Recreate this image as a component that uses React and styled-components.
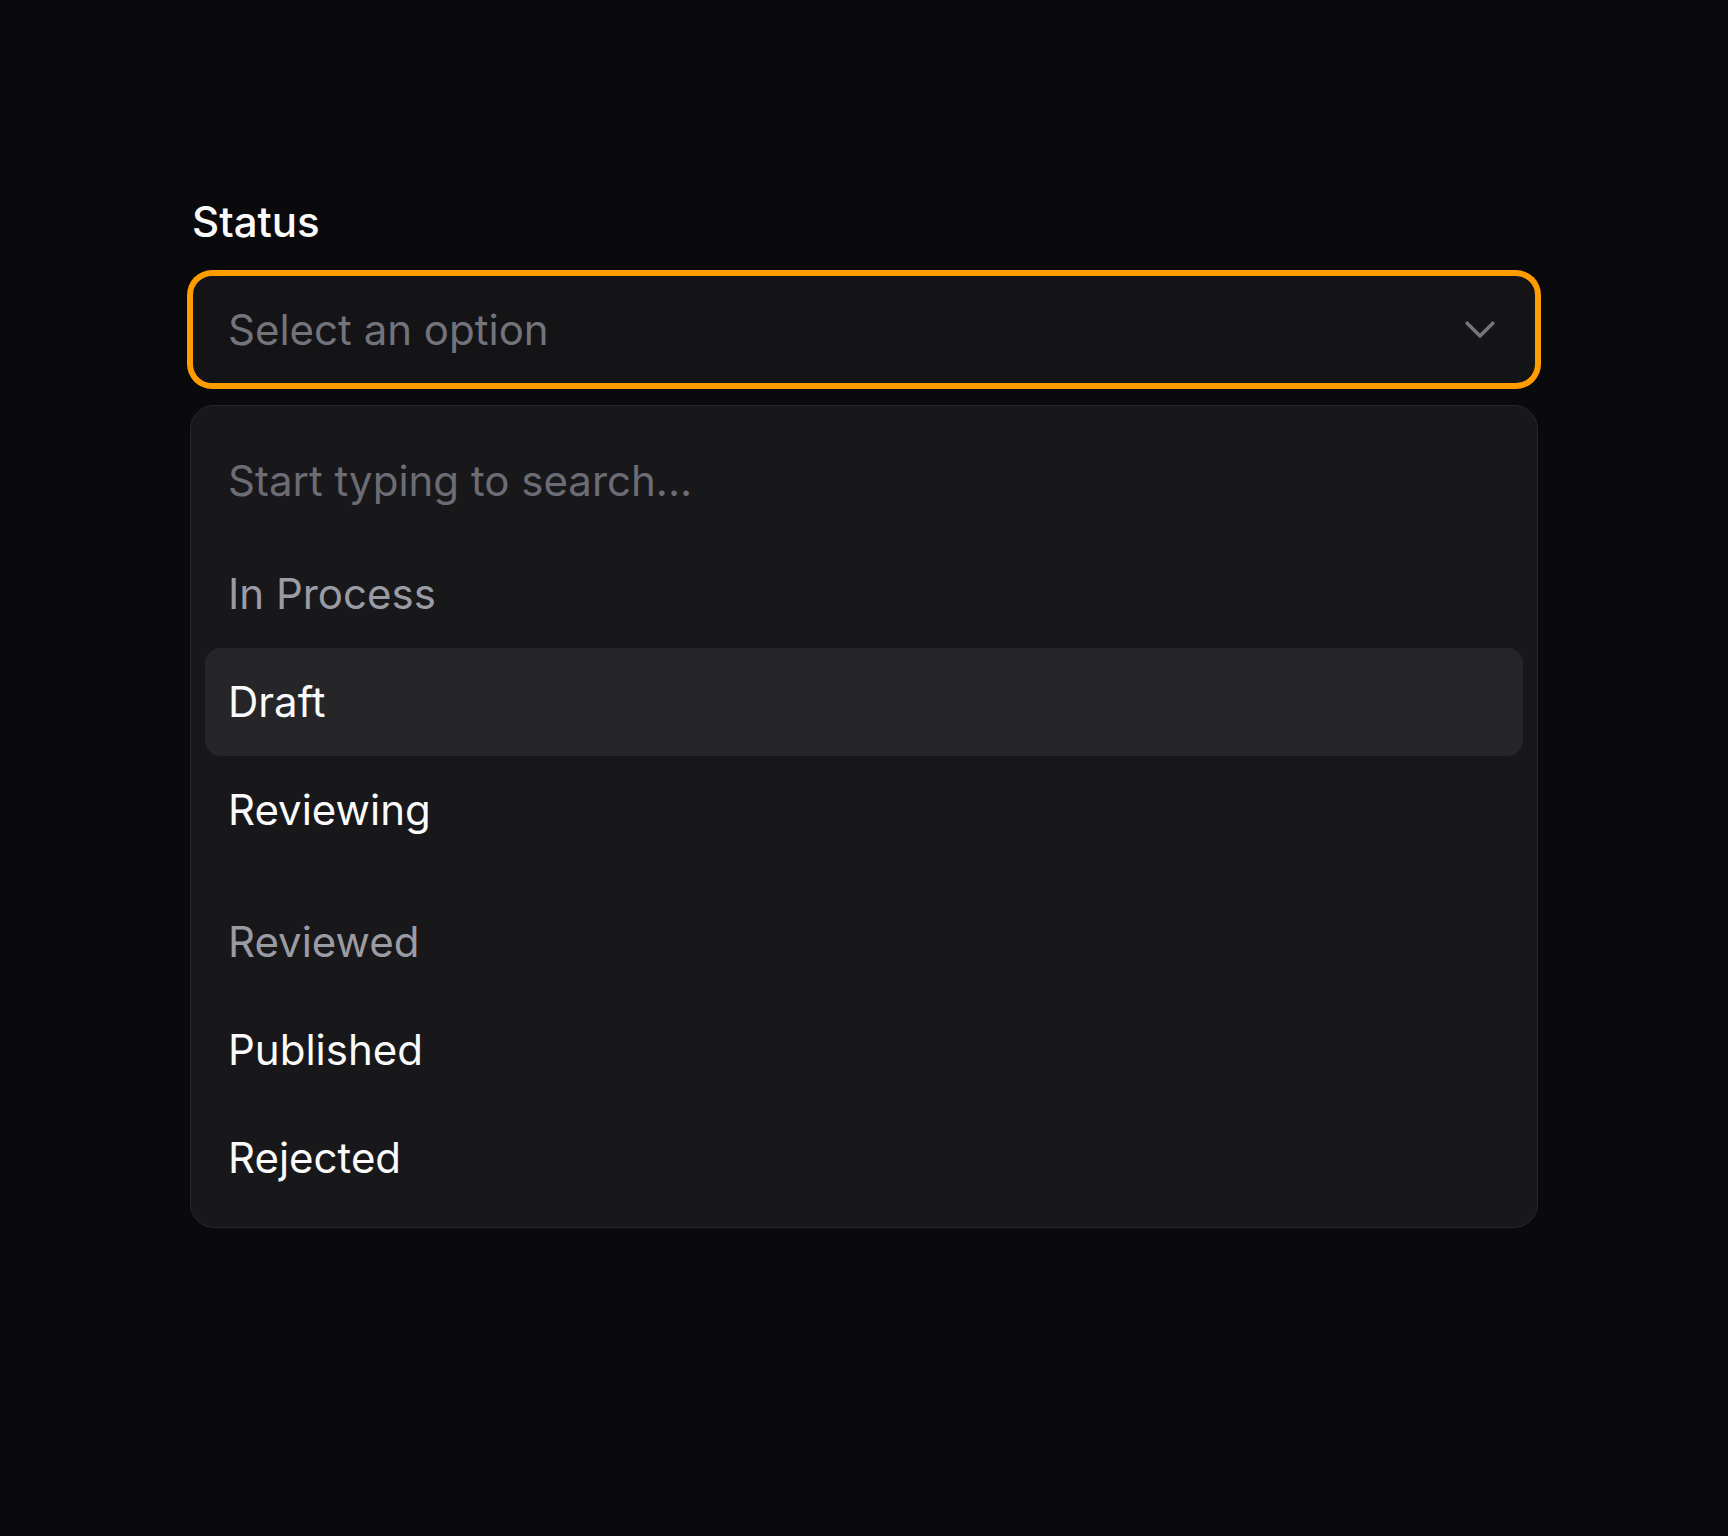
import styled, { createGlobalStyle } from "styled-components";

const GlobalStyle = createGlobalStyle`
body {
   margin: 0;
   background: #0a0a0c;
   font-family: Inter, "Noto Sans", sans-serif;
   -webkit-font-smoothing: antialiased;
}
`

const Page = styled.div`
min-height: 1536px;
padding: 198px 190px 0;
box-sizing: border-box;
`
const Field = styled.div`
display: flex;
flex-direction: column;
`
const Label = styled.div`
font-size: 42px;
line-height: 48px;
font-weight: 500;
color: #fafafa;
padding-left: 2px;
margin-bottom: 27px;
`
const Trigger = styled.button`
display: flex;
align-items: center;
justify-content: space-between;
height: 113px;
padding: 0 40px 0 35px;
background: #141417;
border: 3px solid #ff9d00;
box-shadow: 0 0 0 3px #ff9d00;
border-radius: 22px;
font-family: inherit;
cursor: pointer;
`
const Placeholder = styled.span`
font-size: 42px;
line-height: 48px;
color: #73737c;
`
const Panel = styled.div`
margin-top: 19px;
background: #18181b;
border: 1px solid #27272a;
border-radius: 24px;
padding: 14px 14px 15px;
display: flex;
flex-direction: column;
`
const Search = styled.input`
height: 120px;
padding: 0 23px;
background: transparent;
border: none;
outline: none;
font-family: inherit;
font-size: 42px;
color: #fafafa;
&::placeholder {
   color: #6c6c75;
}
`
const Group = styled.div`
display: flex;
flex-direction: column;
& + & {
   margin-top: 24px;
}
`
const Row = styled.div`
display: flex;
align-items: center;
height: 108px;
padding: 0 23px;
border-radius: 16px;
font-size: 42px;
line-height: 48px;
color: ${p => p.$heading ? "#9b9ba4" : "#fafafa"};
background: ${p => p.$active ? "#262629" : "transparent"};
`

const Chevron = () => (
   <svg width="30" height="18" viewBox="0 0 30 18" fill="none">
      <path d="M2.2 2.2 L15 15 L27.8 2.2" stroke="#74747d" strokeWidth="3.6" strokeLinecap="round" strokeLinejoin="round" />
   </svg>
)

const groups = [
   { title: "In Process", options: ["Draft", "Reviewing"] },
   { title: "Reviewed", options: ["Published", "Rejected"] },
]

export default function App() {
   const active = "Draft";
   return (
      <>
         <GlobalStyle />
         <Page>
            <Field>
               <Label>Status</Label>
               <Trigger>
                  <Placeholder>Select an option</Placeholder>
                  <Chevron />
               </Trigger>
               <Panel>
                  <Search placeholder="Start typing to search..." />
                  {groups.map(g => (
                     <Group key={g.title}>
                        <Row $heading>{g.title}</Row>
                        {g.options.map(o => (
                           <Row key={o} $active={o === active}>{o}</Row>
                        ))}
                     </Group>
                  ))}
               </Panel>
            </Field>
         </Page>
      </>
   )
}
